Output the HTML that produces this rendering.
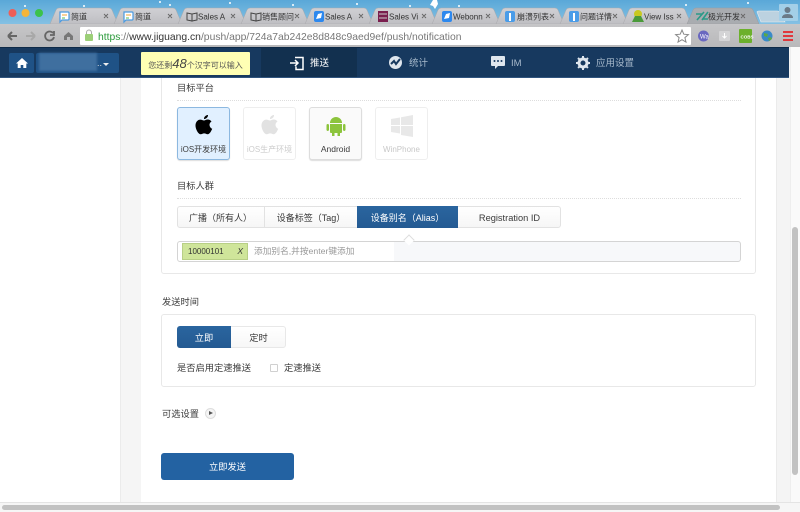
<!DOCTYPE html>
<html><head><meta charset="utf-8">
<style>
html,body{margin:0;padding:0;background:#fff}
body{width:800px;height:512px;overflow:hidden;position:relative;font-family:"Liberation Sans","Noto Sans CJK SC",sans-serif;color:#3c3c3c;filter:blur(.35px)}
.a{position:absolute;white-space:nowrap}
.box{position:absolute;box-sizing:border-box;background:#fff;border:1px solid #e8e8e8;border-radius:3px}
.plat{position:absolute;box-sizing:border-box;width:53px;height:53px;top:107px;border:1px solid #eee;border-radius:3px;background:#fff;text-align:center;font-size:8px}
.lb{font-size:9.25px;color:#3a3a3a;line-height:14px}
.nv{font-size:9.5px;line-height:14px;color:#a8bacc;top:57px}
</style></head>
<body>
<svg class="a" style="left:0;top:0" width="800" height="48" font-family="Liberation Sans,Noto Sans CJK SC,sans-serif">
<defs><linearGradient id="sky" x1="0" y1="0" x2="0" y2="1"><stop offset="0" stop-color="#5aa8d8"/><stop offset="1" stop-color="#86c2e4"/></linearGradient>
<linearGradient id="tb" x1="0" y1="0" x2="0" y2="1"><stop offset="0" stop-color="#d0d0d4"/><stop offset="1" stop-color="#bebec2"/></linearGradient>
<linearGradient id="tool" x1="0" y1="0" x2="0" y2="1"><stop offset="0" stop-color="#c6c6c8"/><stop offset="1" stop-color="#b8b8ba"/></linearGradient></defs>
<rect width="800" height="25" fill="url(#sky)"/>
<g fill="#fff"><circle cx="160" cy="2" r="1"/><circle cx="170" cy="5" r="1"/><circle cx="293" cy="5" r="1"/><circle cx="357" cy="4" r="1"/><circle cx="410" cy="6" r="1"/><circle cx="459" cy="6" r="1"/><circle cx="686" cy="5" r="1"/><circle cx="748" cy="3" r="1"/><circle cx="84" cy="6" r="1"/><circle cx="25" cy="6" r="1"/><circle cx="230" cy="3" r="1"/><path d="M433 0h4l1 4 -3 5 -2-3-3-1z"/></g>
<circle cx="12.500" cy="13" r="4" fill="#ee5e58"/><circle cx="25.500" cy="13" r="4" fill="#f5b53a"/><circle cx="39" cy="13" r="4" fill="#3cc24a"/>
<g id="tabs">
<path d="M50 24l6-14q1-2 3-2h50q2 0 3 2l6 14z" fill="url(#tb)" stroke="#a8a8ac" stroke-width=".5"/>
<path d="M114 24l6-14q1-2 3-2h50q2 0 3 2l6 14z" fill="url(#tb)" stroke="#a8a8ac" stroke-width=".5"/>
<path d="M178 24l6-14q1-2 3-2h50q2 0 3 2l6 14z" fill="url(#tb)" stroke="#a8a8ac" stroke-width=".5"/>
<path d="M241 24l6-14q1-2 3-2h50q2 0 3 2l6 14z" fill="url(#tb)" stroke="#a8a8ac" stroke-width=".5"/>
<path d="M305 24l6-14q1-2 3-2h50q2 0 3 2l6 14z" fill="url(#tb)" stroke="#a8a8ac" stroke-width=".5"/>
<path d="M369 24l6-14q1-2 3-2h50q2 0 3 2l6 14z" fill="url(#tb)" stroke="#a8a8ac" stroke-width=".5"/>
<path d="M432 24l6-14q1-2 3-2h50q2 0 3 2l6 14z" fill="url(#tb)" stroke="#a8a8ac" stroke-width=".5"/>
<path d="M496 24l6-14q1-2 3-2h50q2 0 3 2l6 14z" fill="url(#tb)" stroke="#a8a8ac" stroke-width=".5"/>
<path d="M560 24l6-14q1-2 3-2h50q2 0 3 2l6 14z" fill="url(#tb)" stroke="#a8a8ac" stroke-width=".5"/>
<path d="M623 24l6-14q1-2 3-2h50q2 0 3 2l6 14z" fill="url(#tb)" stroke="#a8a8ac" stroke-width=".5"/>
<path d="M687 24l6-14q1-2 3-2h54q2 0 3 2l6 14z" fill="#a9acb0" stroke="#9a9a9e" stroke-width=".5"/>
<path d="M757 12q0-1 2-1h18q2 0 3 2l5 9h-24z" fill="#bcd2e0" stroke="#e8eef2" stroke-width=".6"/>
</g>
<g font-size="8" fill="#333">
<text x="71" y="19.500">简道</text><text x="135" y="19.500">简道</text><text x="198" y="19.500">Sales A</text><text x="262" y="19.500">销售顾问</text><text x="325" y="19.500">Sales A</text><text x="389" y="19.500">Sales Vi</text><text x="453" y="19.500">Webonn</text><text x="517" y="19.500">崩溃列表</text><text x="580" y="19.500">问题详情</text><text x="644" y="19.500">View Iss</text><text x="708" y="19.500">极光开发</text>
</g>
<g fill="#fff" stroke="#4a9ae0" stroke-width="1.200"><path d="M60 12h8q1 0 1 1v6q0 1-1 1h-6l-2 2z"/><path d="M124 12h8q1 0 1 1v6q0 1-1 1h-6l-2 2z"/></g>
<g stroke="#f0a030" stroke-width="1"><path d="M62 15h5M126 15h5"/></g><g stroke="#5b5" stroke-width="1"><path d="M62 18h3M126 18h3"/></g>
<g fill="none" stroke="#444" stroke-width="1"><path d="M187 13l5 1v7l-5-1zM197 13l-5 1v7l5-1zM251 13l5 1v7l-5-1zM261 13l-5 1v7l5-1z"/></g>
<rect x="314" y="11" width="10" height="11" rx="2" fill="#2d88ee"/><path d="M316 19l2-5 4-1-1 5z" fill="#fff"/>
<rect x="378" y="11" width="10" height="11" fill="#7a1e4e"/><path d="M379 14h8M379 18h8" stroke="#ccc"/>
<rect x="442" y="11" width="10" height="11" rx="2" fill="#2d88ee"/><path d="M444 19l2-5 4-1-1 5z" fill="#fff"/>
<rect x="505" y="11" width="10" height="11" rx="2" fill="#4a9ce8"/><path d="M509 13h2v8h-2z" fill="#fff"/>
<rect x="569" y="11" width="10" height="11" rx="2" fill="#4a9ce8"/><path d="M573 13h2v8h-2z" fill="#fff"/>
<circle cx="638" cy="14" r="4" fill="#c8c820"/><path d="M632 22l3-6h6l3 6z" fill="#4a9a3a"/>
<path d="M697 20l7-8M702 20l6-8M696 14h6M703 19h5" stroke="#2a9a88" stroke-width="1.600" fill="none"/>
<g stroke="#666" stroke-width=".9" fill="none"><path d="M104 14l4 4m0-4l-4 4M168 14l4 4m0-4l-4 4M231 14l4 4m0-4l-4 4M295 14l4 4m0-4l-4 4M359 14l4 4m0-4l-4 4M422 14l4 4m0-4l-4 4M486 14l4 4m0-4l-4 4M550 14l4 4m0-4l-4 4M613 14l4 4m0-4l-4 4M677 14l4 4m0-4l-4 4M741 14l4 4m0-4l-4 4"/></g>
<rect x="779" y="4" width="19" height="17" rx="1" fill="#a3cfe8"/><circle cx="787.500" cy="10" r="3" fill="#6a7a88"/><path d="M782 18q0-4 5.500-4t5.500 4z" fill="#6a7a88"/>
<rect y="24" width="800" height="23" fill="url(#tool)"/>
<path d="M8 36h9M8 36l4-4M8 36l4 4" stroke="#666" stroke-width="2" fill="none"/>
<path d="M35 36h-9M35 36l-4-4M35 36l-4 4" stroke="#a8a8a8" stroke-width="2" fill="none"/>
<path d="M53 33a4.500 4.500 0 1 0 1 4M54 31v4h-4" stroke="#666" stroke-width="1.800" fill="none"/>
<path d="M64 36l4.500-4 4.500 4v4h-3v-3h-3v3h-3z" fill="#777"/>
<rect x="80" y="27" width="611" height="18" rx="1" fill="#fff"/>
<rect x="85" y="34" width="8" height="7" rx="1" fill="#9ccf78"/><path d="M86.500 34v-1.500a2.500 2.500 0 0 1 5 0V34" stroke="#aaa" fill="none"/>
<text x="98" y="40" font-size="10.350" fill="#2a9a3a">https<tspan fill="#777">://</tspan><tspan fill="#333">www.jiguang.cn</tspan><tspan fill="#777">/push/app/724a7ab242e8d848c9aed9ef/push/notification</tspan></text>
<path d="M682 30l1.800 4.200 4.600.4-3.500 3 1.100 4.500-4-2.400-4 2.400 1.100-4.500-3.500-3 4.600-.4z" fill="#fff" stroke="#888"/>
<circle cx="703.500" cy="36" r="5.500" fill="#6a68c0"/><text x="700" y="38.500" font-size="6" fill="#fff">Wa</text>
<rect x="719" y="31" width="11" height="10" rx="1" fill="#d4d4d6"/><path d="M724.500 33v5m-2-2l2 2 2-2" stroke="#fff" fill="none"/>
<rect x="739" y="29" width="13" height="14" rx="1" fill="#6cb02c"/><text x="740.500" y="38.500" font-size="4.500" font-weight="bold" fill="#fff">COBS</text>
<circle cx="767" cy="36" r="5.500" fill="#3a8ac8"/><path d="M764 33l4 1-1 3-3-1zM768 38l3-1 1 2-3 2z" fill="#5aa848"/>
<path d="M783 32h10M783 36h10M783 40h10" stroke="#e0383c" stroke-width="2"/>
</svg>

<div class="a" style="left:120px;top:78px;width:21px;height:434px;background:#f5f5f5;border-left:1px solid #ebebeb;box-sizing:border-box"></div>
<div class="a" style="left:776px;top:47px;width:14px;height:465px;background:#f4f4f4;border-left:1px solid #ebebeb;box-sizing:border-box"></div>
<div class="a" style="left:790px;top:47px;width:10px;height:465px;background:#fafafa;border-left:1px solid #eee;box-sizing:border-box"></div>
<div class="a" style="left:792px;top:227px;width:6px;height:248px;background:#c2c2c2;border-radius:3px"></div>

<div class="a" style="left:0;top:47px;width:789px;height:31px;background:#17395f;border-top:1px solid #0e2a48;border-bottom:1px solid #31557f;box-sizing:border-box"></div>
<div class="a" style="left:261px;top:48px;width:96px;height:29px;background:#12304f"></div>
<div class="a" style="left:9px;top:53px;width:25px;height:20px;background:#1f5286;border-radius:2px"></div>
<svg class="a" style="left:16px;top:57px" width="12" height="12"><path d="M6 1L0 6.500h1.700V11h3V8h2.600v3h3V6.500H12z" fill="#fff"/></svg>
<div class="a" style="left:36px;top:53px;width:83px;height:20px;background:#1f5286;border-radius:2px"></div>
<div class="a" style="left:39px;top:53px;width:58px;height:18px;background:#3f6f9f;filter:blur(1px)"></div>
<div class="a" style="left:97px;top:59px;font-size:9px;line-height:9px;color:#ddd">..</div>
<div class="a" style="left:103px;top:63px;border:3px solid transparent;border-top:3px solid #eee"></div>
<div class="a" style="left:141px;top:52px;width:109px;height:23px;background:#ffffb4;color:#555;font-size:8px;line-height:23px;text-align:center;border-radius:1px">您还剩<i style="font-size:13px;color:#444">48</i>个汉字可以输入</div>
<svg class="a" style="left:289px;top:55px" width="16" height="16"><path d="M6 2.500h8v12H7v-3M1 8h7M6 5l3 3-3 3" stroke="#fff" stroke-width="1.500" fill="none"/></svg>
<div class="a nv" style="left:310px;color:#fff">推送</div>
<svg class="a" style="left:388px;top:55px" width="15" height="15"><circle cx="7.500" cy="7.500" r="6.500" fill="#dfe6ee"/><path d="M3 9l3-3 2 3 4-5" stroke="#17395f" stroke-width="2" fill="none"/></svg>
<div class="a nv" style="left:409px">统计</div>
<svg class="a" style="left:490px;top:55px" width="16" height="16"><path d="M2 1h12q1 0 1 1v8q0 1-1 1H8l-3 3v-3H2q-1 0-1-1V2q0-1 1-1z" fill="#dfe6ee"/><g fill="#17395f"><circle cx="4.500" cy="6" r="1"/><circle cx="8" cy="6" r="1"/><circle cx="11.500" cy="6" r="1"/></g></svg>
<div class="a nv" style="left:511px">IM</div>
<svg class="a" style="left:576px;top:56px" width="14" height="14"><circle cx="7" cy="7" r="4" fill="none" stroke="#dfe6ee" stroke-width="3"/><path d="M7 0v14M0 7h14M2 2l10 10M12 2L2 12" stroke="#dfe6ee" stroke-width="2" stroke-dasharray="2.500 9 2.500"/></svg>
<div class="a nv" style="left:596px">应用设置</div>

<div class="box" style="left:161px;top:78px;width:595px;height:196px;border-top:0;border-radius:0 0 3px 3px"></div>
<div class="a lb" style="left:177px;top:81px">目标平台</div>
<div class="a" style="left:177px;top:100px;width:564px;border-top:1px dotted #ddd"></div>

<div class="plat" style="left:177px;background:#e1f0ff;border-color:#8cb8e0;box-shadow:0 1px 1px #ddd">
<svg class="a" style="left:16px;top:6px" width="20" height="22" viewBox="0 0 20 22"><path d="M14 1c.2 2-1.800 4.200-4 4 -.2-2 2-4.200 4-4zM10 6.500c1 0 2-1 3.800-1 1.400 0 2.800.8 3.700 2-3 1.800-2.500 6 .7 7.300-1 2.500-2.700 5.500-4.500 5.500-1.300 0-1.800-.9-3.500-.9s-2.300.9-3.500.9C4.400 20.300 1.500 15.500 1.500 11.500c0-3.500 2.300-5.900 4.700-5.900 1.700 0 2.900.9 3.800.9z" fill="#000"/></svg>
<div class="a" style="left:0;width:51px;top:36px;line-height:12px;text-align:center">iOS开发环境</div></div>
<div class="plat" style="left:243px;color:#ccc">
<svg class="a" style="left:16px;top:6px" width="20" height="22" viewBox="0 0 20 22"><path d="M14 1c.2 2-1.800 4.200-4 4 -.2-2 2-4.200 4-4zM10 6.500c1 0 2-1 3.800-1 1.400 0 2.800.8 3.700 2-3 1.800-2.500 6 .7 7.300-1 2.500-2.700 5.500-4.500 5.500-1.300 0-1.800-.9-3.500-.9s-2.300.9-3.500.9C4.400 20.300 1.500 15.500 1.500 11.500c0-3.500 2.300-5.900 4.700-5.900 1.700 0 2.900.9 3.800.9z" fill="#e2e2e2"/></svg>
<div class="a" style="left:0;width:51px;top:36px;line-height:12px;text-align:center">iOS生产环境</div></div>
<div class="plat" style="left:309px;border-color:#ddd;background:#fafafa;box-shadow:0 1px 1px #ddd;font-size:8.5px">
<svg class="a" style="left:16px;top:7px" width="20" height="22" viewBox="0 0 20 22"><path d="M4 8a6 6 0 0 1 12 0zM4 9h12v8q0 1-1 1h-1v3h-2.500v-3h-3v3H6v-3H5q-1 0-1-1z" fill="#8cc43c"/><rect x="0.500" y="9" width="2.500" height="7" rx="1.200" fill="#8cc43c"/><rect x="17" y="9" width="2.500" height="7" rx="1.200" fill="#8cc43c"/></svg>
<div class="a" style="left:0;width:51px;top:35px;line-height:12px;text-align:center">Android</div></div>
<div class="plat" style="left:375px;color:#c8c8c8">
<svg class="a" style="left:15px;top:7px" width="22" height="22"><path d="M0 4l9-1.500V10H0zM10 2.300L22 0v10H10zM0 11h9v7.500L0 17zM10 11h12v11l-12-2z" fill="#e8e8e8"/></svg>
<div class="a" style="left:0;width:51px;top:36px;line-height:12px;text-align:center">WinPhone</div></div>

<div class="a lb" style="left:177px;top:179px">目标人群</div>
<div class="a" style="left:177px;top:198px;width:564px;border-top:1px dotted #ddd"></div>

<div class="a" style="left:177px;top:206px;width:384px;height:22px;box-sizing:border-box;border:1px solid #e2e2e2;border-radius:3px;background:linear-gradient(#fff,#f6f6f6)"></div>
<div class="a" style="left:264px;top:206px;width:1px;height:22px;background:#e2e2e2"></div>
<div class="a" style="left:357px;top:206px;width:101px;height:22px;background:linear-gradient(#2a659f,#245a92)"></div>
<div class="a lb" style="left:177px;top:211px;width:87px;text-align:center;font-size:9px">广播（所有人）</div>
<div class="a lb" style="left:265px;top:211px;width:92px;text-align:center;font-size:9px">设备标签（Tag）</div>
<div class="a lb" style="left:357px;top:211px;width:101px;text-align:center;color:#fff;font-size:9px">设备别名（Alias）</div>
<div class="a lb" style="left:458px;top:211px;width:103px;text-align:center">Registration ID</div>

<div class="a" style="left:177px;top:241px;width:564px;height:21px;box-sizing:border-box;border:1px solid #d4d4d4;border-radius:3px;background:linear-gradient(90deg,#fff 0,#fff 216px,#f7f8fa 216px)"></div>
<div class="a" style="left:405px;top:236px;width:8px;height:8px;background:#fff;border:1px solid #ddd;border-right:0;border-bottom:0;transform:rotate(45deg);box-sizing:border-box"></div>
<div class="a" style="left:182px;top:243px;width:66px;height:17px;box-sizing:border-box;background:#cfe59a;border:1px solid #b8cf86;font-size:8px;line-height:15px;color:#333;padding-left:5px">10000101<i style="position:absolute;right:4px;top:0;font-size:8.5px">X</i></div>
<div class="a" style="left:254px;top:244px;font-size:8.7px;line-height:14px;color:#999">添加别名,并按enter键添加</div>

<div class="a lb" style="left:162px;top:295px">发送时间</div>
<div class="box" style="left:161px;top:314px;width:595px;height:73px"></div>
<div class="a" style="left:177px;top:326px;width:109px;height:22px;box-sizing:border-box;border:1px solid #e8e8e8;border-radius:3px;background:linear-gradient(#fff,#f7f7f7)"></div>
<div class="a lb" style="left:177px;top:326px;width:54px;height:22px;line-height:25px;background:linear-gradient(#2a659f,#245a92);border-radius:3px 0 0 3px;color:#fff;text-align:center">立即</div>
<div class="a lb" style="left:231px;top:326px;width:55px;line-height:25px;text-align:center">定时</div>
<div class="a lb" style="left:177px;top:361px">是否启用定速推送</div>
<div class="a" style="left:270px;top:364px;width:8px;height:8px;box-sizing:border-box;border:1px solid #d0d0d0;border-radius:1px;background:#fff"></div>
<div class="a lb" style="left:284px;top:361px">定速推送</div>

<div class="a lb" style="left:162px;top:407px">可选设置</div>
<div class="a" style="left:205px;top:408px;width:11px;height:11px;box-sizing:border-box;border:1px solid #ddd;border-radius:50%;background:#f4f4f4"></div>
<div class="a" style="left:209px;top:411px;border-left:4px solid #555;border-top:2.500px solid transparent;border-bottom:2.500px solid transparent"></div>

<div class="a" style="left:161px;top:453px;width:133px;height:27px;background:#2362a2;box-sizing:border-box;border-radius:3px;color:#fff;font-size:9.25px;line-height:29px;text-align:center">立即发送</div>

<div class="a" style="left:0;top:502px;width:800px;height:10px;background:#f6f6f6;border-top:1px solid #e4e4e4;box-sizing:border-box"></div>
<div class="a" style="left:2px;top:505px;width:778px;height:5px;background:#c2c2c2;border-radius:3px"></div>
</body></html>
